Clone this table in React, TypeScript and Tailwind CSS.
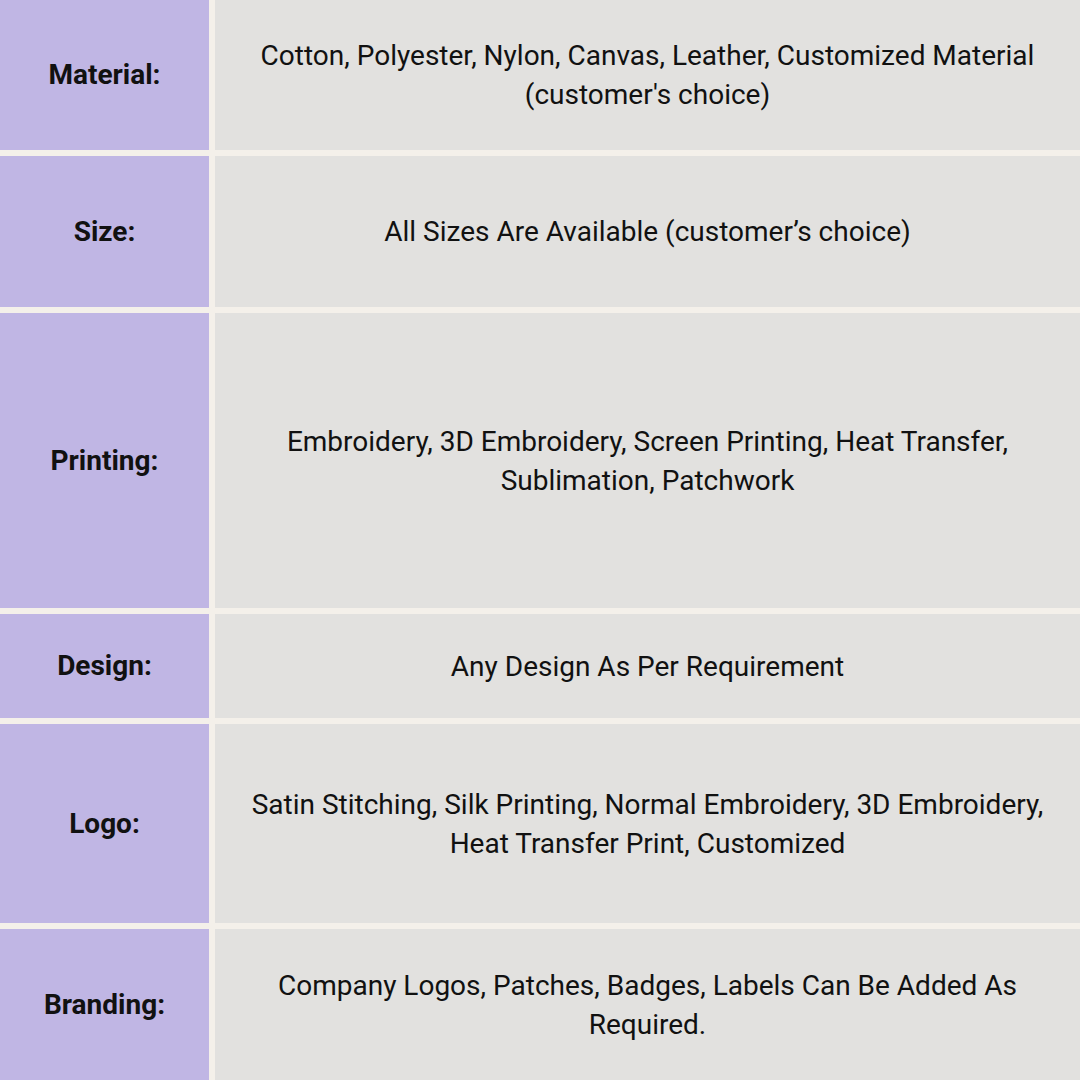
const rows = [
  { label: 'Material:', value: ['Cotton, Polyester, Nylon, Canvas, Leather, Customized Material', "(customer's choice)"], h: 'h-[150px]' },
  { label: 'Size:', value: ['All Sizes Are Available (customer’s choice)'], h: 'h-[151px]' },
  { label: 'Printing:', value: ['Embroidery, 3D Embroidery, Screen Printing, Heat Transfer,', 'Sublimation, Patchwork'], h: 'h-[295px]' },
  { label: 'Design:', value: ['Any Design As Per Requirement'], h: 'h-[104px]' },
  { label: 'Logo:', value: ['Satin Stitching, Silk Printing, Normal Embroidery, 3D Embroidery,', 'Heat Transfer Print, Customized'], h: 'h-[199px]' },
  { label: 'Branding:', value: ['Company Logos, Patches, Badges, Labels Can Be Added As', 'Required.'], h: 'h-[151px]' },
]

export default function App() {
  return (
    <div className="w-[1080px] h-[1080px] overflow-hidden bg-[#f4f0ea] flex flex-col gap-[6px] font-['Roboto',sans-serif] text-[#111111]">
      {rows.map((row) => (
        <div key={row.label} className={`flex gap-[6px] shrink-0 ${row.h}`}>
          <div className="w-[209px] shrink-0 bg-[#c0b6e4] flex items-center justify-center text-[28px] font-bold">
            {row.label}
          </div>
          <div className="flex-1 bg-[#e2e1df] flex flex-col items-center justify-center text-center text-[28px] leading-[39px]">
            {row.value.map((line) => (
              <div key={line}>{line}</div>
            ))}
          </div>
        </div>
      ))}
    </div>
  )
}
